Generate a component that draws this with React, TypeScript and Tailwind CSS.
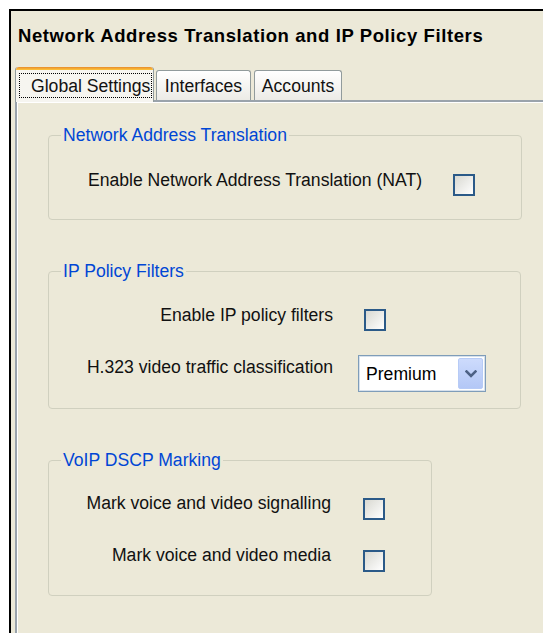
import React from "react";

const Checkbox = ({ className = "" }: { className?: string }) => (
    <div className={`h-[22px] w-[22px] shrink-0 border-2 border-[#2b5a88] bg-linear-to-br from-[#d9d9d2] to-white ${className}`} />
);

const Select = ({ value }: { value: string }) => (
    <div className="flex h-[37px] w-[128px] items-center border border-[#7f9db9] bg-white shadow-[inset_0_0_0_1px_#d7e1ec]">
        <span className="flex-1 pl-[7px] leading-[20px] text-black">{value}</span>
        <div className="mr-[2px] flex h-[31px] w-[25px] items-center justify-center rounded-[2px] border border-[#b7cbf6] bg-linear-to-b from-[#cddbfc] to-[#b3c7f6]">
            <svg width="12" height="8" viewBox="0 0 12 8">
                <polyline points="1.5,1.5 6,6 10.5,1.5" fill="none" stroke="#4d6185" strokeWidth="2.6" strokeLinecap="square" />
            </svg>
        </div>
    </div>
);

const GroupBox = ({ title, className, children }: { title: string; className: string; children: React.ReactNode }) => (
    <fieldset className={`ml-[31px] rounded-[4px] border border-[#d0d0bf] ${className}`}>
        <legend className="ml-[12px] px-[2px] leading-[20px] text-[#0046d5]">{title}</legend>
        {children}
    </fieldset>
);

const App = () => {
    return (
        <div className="h-[633px] w-[543px] overflow-hidden bg-white pl-[9px] pt-[9px] font-['Liberation_Sans',Arial,sans-serif] text-[17.6px] text-[#111]">
            <div className="h-full border-l-2 border-t-2 border-black bg-[#ece9d8]">
                <h1 className="pl-[7px] pt-[15px] text-[18.5px] font-bold leading-[20px] tracking-[0.6px] text-black">
                    Network Address Translation and IP Policy Filters
                </h1>

                {/* tab strip */}
                <div className="ml-[4px] mt-[21px] flex h-[33px] items-end">
                    <div className="relative z-10 -mb-[2px] flex h-[35px] w-[139px] flex-col rounded-t-[3px] border-x border-[#919b9c] bg-[#f6f5f0]">
                        <div className="h-[3px] rounded-t-[3px] bg-linear-to-b from-[#e68b2c] to-[#ffc73c]" />
                        <div className="ml-[3px] mr-[1px] mt-[3px] flex h-[25px] items-center border border-dotted border-black pl-[11px] leading-[20px]">
                            Global Settings
                        </div>
                    </div>
                    <div className="ml-[2px] flex h-[30px] w-[95px] items-center justify-center rounded-t-[3px] border-x border-t border-[#919b9c] bg-linear-to-b from-white to-[#ecebe6] leading-[20px]">
                        Interfaces
                    </div>
                    <div className="ml-[3px] flex h-[30px] w-[88px] items-center justify-center rounded-t-[3px] border-x border-t border-[#919b9c] bg-linear-to-b from-white to-[#ecebe6] leading-[20px]">
                        Accounts
                    </div>
                </div>

                {/* tab page */}
                <div className="ml-[4px] h-full border-l-2 border-t-2 border-[#9aa3ab] pt-[23px] shadow-[inset_1px_1px_0_#fff]">
                    <GroupBox title="Network Address Translation" className="w-[474px]">
                        <div className="flex items-start pb-[23px] pl-[34px] pt-[25px]">
                            <span className="w-[339px] text-right leading-[20px]">Enable Network Address Translation (NAT)</span>
                            <Checkbox className="ml-[31px] mt-[4px]" />
                        </div>
                    </GroupBox>

                    <GroupBox title="IP Policy Filters" className="mt-[41px] w-[473px]">
                        <div className="pb-[16px] pl-[34px] pt-[24px]">
                            <div className="flex items-start">
                                <span className="w-[250px] text-right leading-[20px]">Enable IP policy filters</span>
                                <Checkbox className="ml-[31px] mt-[4px]" />
                            </div>
                            <div className="mt-[24px] flex items-start">
                                <span className="mt-[2px] w-[250px] text-right leading-[20px]">H.323 video traffic classification</span>
                                <div className="ml-[25px]">
                                    <Select value="Premium" />
                                </div>
                            </div>
                        </div>
                    </GroupBox>

                    <GroupBox title="VoIP DSCP Marking" className="mt-[41px] w-[384px]">
                        <div className="pb-[23px] pl-[34px] pt-[23px]">
                            <div className="flex items-start">
                                <span className="w-[248px] text-right leading-[20px]">Mark voice and video signalling</span>
                                <Checkbox className="ml-[32px] mt-[5px]" />
                            </div>
                            <div className="mt-[25px] flex items-start">
                                <span className="w-[248px] text-right leading-[20px]">Mark voice and video media</span>
                                <Checkbox className="ml-[32px] mt-[5px]" />
                            </div>
                        </div>
                    </GroupBox>
                </div>
            </div>
        </div>
    );
};

export default App;
